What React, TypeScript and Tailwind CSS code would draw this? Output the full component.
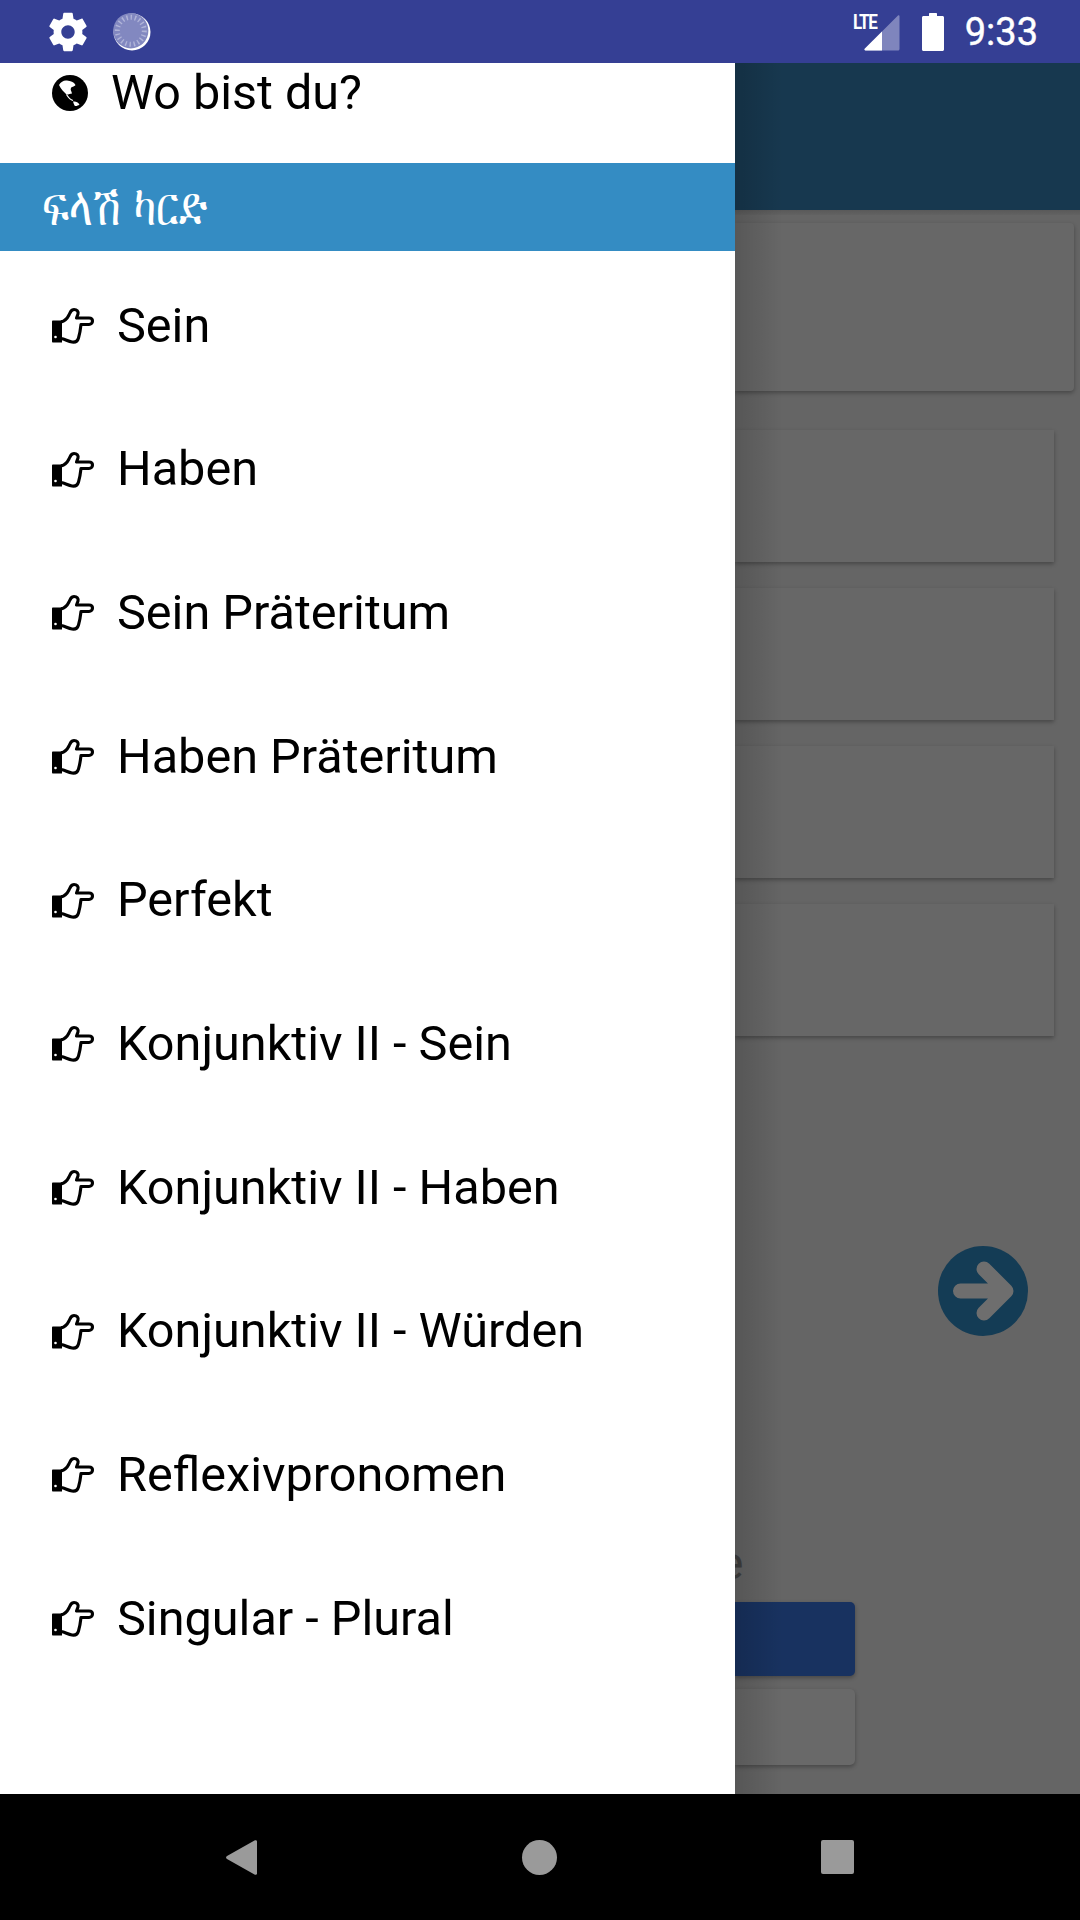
import React from 'react'

const topics = [
  'Sein',
  'Haben',
  'Sein Präteritum',
  'Haben Präteritum',
  'Perfekt',
  'Konjunktiv II - Sein',
  'Konjunktiv II - Haben',
  'Konjunktiv II - Würden',
  'Reflexivpronomen',
  'Singular - Plural',
]

function HandIcon() {
  return (
    <svg viewBox="0 0 54 50" className="-mt-[2px] h-[50px] w-[54px] shrink-0">
      <path d="M7 20.500H15L16 20V42.500H7C6.400 42.500 6 42 6 41.500V21.500C6 21 6.400 20.500 7 20.500Z" fill="#000000" />
      <circle cx="9.500" cy="37" r="1.300" fill="#ffffff" />
      <path
        d="M15 22C19 21 21.500 18 23 15C24.500 11.500 25 9.500 28 9.500C31 9.500 32.500 11.500 32 14L30.500 18H43C45.500 18 46.500 19.500 46.500 21C46.500 23 45 24.500 43 24.500H35C34.500 29 34 33 32.500 38C31.500 41.500 29 42.500 26 42C22 41.500 19 39 15 38.500"
        fill="none"
        stroke="#000000"
        strokeWidth="3.100"
        strokeLinejoin="round"
      />
    </svg>
  )
}

function GlobeIcon() {
  return (
    <svg viewBox="0 0 48 48" className="h-[48px] w-[48px] shrink-0">
      <circle cx="24" cy="24" r="18" fill="#000000" />
      <path d="M13 16C15 12.500 18 11 21 11.500C24.500 12 28 13 29.500 16C28 18 25.500 17.500 25 19C24 20.500 25.500 22 26 24.500C24 24.500 22 26 20.500 25.500C18 23 15 20.500 13 16Z" fill="#ffffff" />
      <path d="M20.500 25.500C22 28 25 31 27 31.500" fill="none" stroke="#ffffff" strokeWidth="1.200" />
      <path d="M27 32.500C29.500 32 32 33 33.500 35.500C31.500 37 29.500 37.500 28.500 36.500C28 35.500 27.500 34 27 32.500Z" fill="#ffffff" />
    </svg>
  )
}

function StatusBar() {
  return (
    <div className="relative flex h-[63px] shrink-0 items-center bg-[#353f94] pl-[45px] pr-[42px] text-white">
      {/* Settings gear */}
      <svg viewBox="0 0 24 24" className="h-[46px] w-[46px] fill-white">
        <path d="M19.43 12.98c.04-.32.07-.64.07-.98s-.03-.66-.07-.98l2.11-1.65c.19-.15.24-.42.12-.64l-2-3.46c-.12-.22-.39-.3-.61-.22l-2.49 1c-.52-.4-1.08-.73-1.69-.98l-.38-2.65C14.46 2.18 14.25 2 14 2h-4c-.25 0-.46.18-.49.42l-.38 2.65c-.61.25-1.17.59-1.69.98l-2.49-1c-.23-.09-.49 0-.61.22l-2 3.46c-.13.22-.07.49.12.64l2.11 1.65c-.04.32-.07.65-.07.98s.03.66.07.98l-2.11 1.65c-.19.15-.24.42-.12.64l2 3.46c.12.22.39.3.61.22l2.49-1c.52.4 1.08.73 1.69.98l.38 2.65c.03.24.24.42.49.42h4c.25 0 .46-.18.49-.42l.38-2.65c.61-.25 1.17-.59 1.69-.98l2.49 1c.23.09.49 0 .61-.22l2-3.46c.12-.22.07-.49-.12-.64l-2.11-1.65zM12 15.5c-1.93 0-3.5-1.57-3.5-3.5s1.57-3.5 3.5-3.5 3.5 1.57 3.5 3.5-1.57 3.5-3.5 3.5z" />
      </svg>
      {/* Loading disc */}
      <svg viewBox="0 0 38 38" className="ml-[22px] h-[38px] w-[38px]">
        <circle cx="19" cy="19" r="18.5" fill="#ffffff" />
        <circle cx="17.8" cy="17.8" r="17.6" fill="#8288c0" />
        <circle
          cx="17.8"
          cy="17.8"
          r="13.5"
          fill="none"
          stroke="#b0b4d8"
          strokeWidth="5"
          strokeDasharray="1.4 2.8"
        />
      </svg>

      <div className="ml-auto flex items-center">
        {/* LTE + signal */}
        <div className="relative h-[38px] w-[47px]">
          <svg viewBox="0 0 47 38" className="absolute inset-0 h-[38px] w-[47px]">
            <path d="M45 2.5c.6-.6 1.5-.2 1.5.6V36c0 .8-.6 1.5-1.5 1.5H12.5c-1 0-1.4-1-.8-1.7z" fill="#7f85bd" />
            <path d="M29 18.5V37.5H12.5c-1 0-1.4-1-.8-1.7z" fill="#ffffff" />
          </svg>
          <span className="absolute left-0 top-[-1px] origin-left scale-x-[0.85] font-[Roboto,sans-serif] text-[20px] font-bold leading-[20px] tracking-[-1.5px]">
            LTE
          </span>
        </div>
        {/* Battery */}
        <svg viewBox="0 0 22 38" className="ml-[22px] h-[38px] w-[22px] fill-white">
          <path d="M7 1c0-.6.4-1 1-1h6c.6 0 1 .4 1 1v2h5.5c.8 0 1.5.7 1.5 1.5v32c0 .8-.7 1.5-1.5 1.5h-19C.7 38 0 37.3 0 36.5v-32C0 3.700.7 3 1.500 3H7z" />
        </svg>
        <span className="ml-[21px] font-[Roboto,sans-serif] text-[38px] leading-none [-webkit-text-stroke:0.4px_white]">9:33</span>
      </div>
    </div>
  )
}

function Drawer() {
  return (
    <div className="relative z-10 flex w-[735px] shrink-0 flex-col bg-white font-[Roboto,sans-serif] text-black">
      <div className="flex h-[100px] shrink-0 items-start pl-[46px]">
        <div className="flex h-[60px] items-center">
          <GlobeIcon />
          <span className="ml-[17px] text-[48.5px] leading-none">Wo bist du?</span>
        </div>
      </div>
      <div className="flex h-[88px] shrink-0 items-center bg-[#348cc3] pb-[2px] pl-[42px] font-['DejaVu_Sans',sans-serif] text-white">
        <span className="inline-block scale-y-[1.35] text-[41px] leading-none">ፍላሽ ካርድ</span>
      </div>
      <div className="pt-[3px]">
        {topics.map((topic) => (
          <div key={topic} className="flex h-[143.7px] items-center pl-[46px]">
            <HandIcon />
            <span className="ml-[17px] text-[48.6px] leading-none">{topic}</span>
          </div>
        ))}
      </div>
    </div>
  )
}

function Backdrop() {
  return (
    <div className="relative flex min-w-0 flex-1 flex-col overflow-hidden bg-[#656565]">
      <div className="h-[147px] shrink-0 bg-[#17384f]" />
      <div className="h-[5px] shrink-0 bg-gradient-to-b from-[#595959] to-[#626262]" />

      <div className="mr-[6px] mt-[8px] h-[168px] shrink-0 rounded-r-[4px] bg-[#676767] shadow-[0_2px_4px_rgba(0,0,0,0.3)]" />

      <div className="mr-[26px] mt-[39px] flex shrink-0 flex-col gap-[26px]">
        <div className="h-[132px] bg-[#676767] shadow-[0_2px_4px_rgba(0,0,0,0.3)]" />
        <div className="h-[132px] bg-[#676767] shadow-[0_2px_4px_rgba(0,0,0,0.3)]" />
        <div className="h-[132px] bg-[#676767] shadow-[0_2px_4px_rgba(0,0,0,0.3)]" />
        <div className="h-[132px] bg-[#676767] shadow-[0_2px_4px_rgba(0,0,0,0.3)]" />
      </div>

      <div className="mr-[52px] mt-[210px] flex shrink-0 justify-end">
        <svg viewBox="0 0 90 90" className="h-[90px] w-[90px]">
          <circle cx="45" cy="45" r="45" fill="#143c55" />
          <path d="M22.500 45H66M46 23L68 45L46 67" fill="none" stroke="#6e6e6e" strokeWidth="15" strokeLinejoin="round" strokeLinecap="round" />
        </svg>
      </div>

      <div className="-ml-[16px] mt-[203px] h-[48px] shrink-0 font-[Roboto,sans-serif] text-[46px] leading-[48px] text-[#3f3f3f]">e</div>

      <div className="mr-[225px] mt-[15px] h-[74px] shrink-0 rounded-r-[5px] bg-[#183260] shadow-[0_2px_4px_rgba(0,0,0,0.3)]" />
      <div className="mr-[225px] mt-[13px] h-[76px] shrink-0 rounded-r-[5px] bg-[#696969] shadow-[0_2px_4px_rgba(0,0,0,0.3)]" />

      {/* Drawer edge shadow */}
      <div className="absolute inset-y-0 left-0 w-[48px] bg-gradient-to-r from-black/15 to-transparent" />
    </div>
  )
}

function NavBar() {
  return (
    <div className="flex h-[126px] shrink-0 items-center bg-black">
      <svg viewBox="0 0 31 35" className="ml-[226px] h-[35px] w-[31px] fill-[#9a9a9a]">
        <path d="M28.500.500c.9-.7 2.500-.3 2.500 1V33.500c0 1.300-1.600 1.700-2.500 1L1 19c-1.300-.8-1.300-2.200 0-3z" />
      </svg>
      <div className="ml-[265px] h-[35px] w-[35px] rounded-full bg-[#9a9a9a]" />
      <div className="ml-[264px] h-[34px] w-[33px] rounded-[2px] bg-[#9a9a9a]" />
    </div>
  )
}

export default function App() {
  return (
    <div className="flex h-[1920px] w-[1080px] flex-col overflow-hidden">
      <StatusBar />
      <div className="flex min-h-0 flex-1">
        <Drawer />
        <Backdrop />
      </div>
      <NavBar />
    </div>
  )
}
